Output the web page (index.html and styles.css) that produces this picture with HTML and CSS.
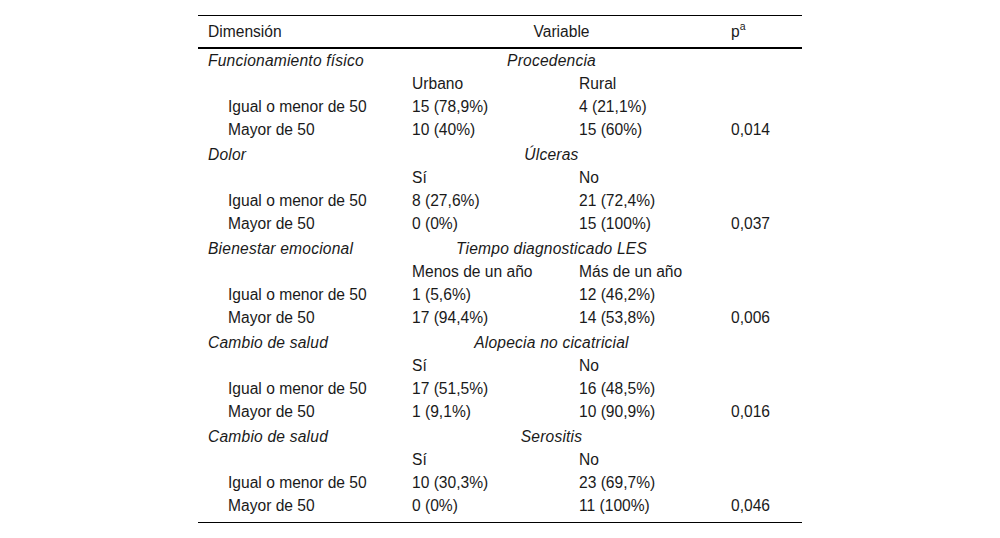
FILE: index.html
```html
<!DOCTYPE html>
<html lang="es">
<head>
<meta charset="utf-8">
<link rel="stylesheet" href="styles.css">
</head>
<body>
<table class="data">
  <colgroup>
    <col class="c1"><col class="c2"><col class="c3"><col class="c4">
  </colgroup>
  <thead>
    <tr><th>Dimensión</th><th colspan="2" class="center">Variable</th><th>p<sup>a</sup></th></tr>
  </thead>
  <tbody>
    <tr class="group first"><td class="it">Funcionamiento físico</td><td colspan="2" class="it center">Procedencia</td><td></td></tr>
    <tr><td></td><td>Urbano</td><td>Rural</td><td></td></tr>
    <tr><td class="ind">Igual o menor de 50</td><td>15 (78,9%)</td><td>4 (21,1%)</td><td></td></tr>
    <tr><td class="ind">Mayor de 50</td><td>10 (40%)</td><td>15 (60%)</td><td>0,014</td></tr>

    <tr class="group"><td class="it">Dolor</td><td colspan="2" class="it center">Úlceras</td><td></td></tr>
    <tr><td></td><td>Sí</td><td>No</td><td></td></tr>
    <tr><td class="ind">Igual o menor de 50</td><td>8 (27,6%)</td><td>21 (72,4%)</td><td></td></tr>
    <tr><td class="ind">Mayor de 50</td><td>0 (0%)</td><td>15 (100%)</td><td>0,037</td></tr>

    <tr class="group"><td class="it">Bienestar emocional</td><td colspan="2" class="it center">Tiempo diagnosticado LES</td><td></td></tr>
    <tr><td></td><td>Menos de un año</td><td>Más de un año</td><td></td></tr>
    <tr><td class="ind">Igual o menor de 50</td><td>1 (5,6%)</td><td>12 (46,2%)</td><td></td></tr>
    <tr><td class="ind">Mayor de 50</td><td>17 (94,4%)</td><td>14 (53,8%)</td><td>0,006</td></tr>

    <tr class="group"><td class="it">Cambio de salud</td><td colspan="2" class="it center">Alopecia no cicatricial</td><td></td></tr>
    <tr><td></td><td>Sí</td><td>No</td><td></td></tr>
    <tr><td class="ind">Igual o menor de 50</td><td>17 (51,5%)</td><td>16 (48,5%)</td><td></td></tr>
    <tr><td class="ind">Mayor de 50</td><td>1 (9,1%)</td><td>10 (90,9%)</td><td>0,016</td></tr>

    <tr class="group"><td class="it">Cambio de salud</td><td colspan="2" class="it center">Serositis</td><td></td></tr>
    <tr><td></td><td>Sí</td><td>No</td><td></td></tr>
    <tr><td class="ind">Igual o menor de 50</td><td>10 (30,3%)</td><td>23 (69,7%)</td><td></td></tr>
    <tr class="last"><td class="ind">Mayor de 50</td><td>0 (0%)</td><td>11 (100%)</td><td>0,046</td></tr>
  </tbody>
</table>
</body>
</html>
```

FILE: styles.css
```css
html, body {
  margin: 0;
  padding: 0;
  background: #fff;
}
body {
  font-family: "Liberation Sans", Arial, sans-serif;
  font-size: 15.6px;
  color: #1a1a1a;
  padding-top: 15px;
}
.data {
  width: 604px;
  margin: 0 auto;
  border-collapse: collapse;
  table-layout: fixed;
}
.c1 { width: 204px; }
.c2 { width: 167px; }
.c3 { width: 152px; }
.c4 { width: 81px; }
.data th {
  font-weight: normal;
  text-align: left;
  padding: 0 0 0 10px;
  line-height: 31px;
  border-top: 1px solid #000;
  border-bottom: 2px solid #000;
  vertical-align: middle;
}
.data th.center {
  text-align: center;
  padding-left: 0;
}
.data th sup {
  font-size: 10.5px;
  line-height: 0;
  vertical-align: 7px;
}
.data td {
  padding: 0 0 0 10px;
  line-height: 23px;
  vertical-align: middle;
  white-space: nowrap;
}
.data tr.group td {
  padding-top: 2px;
}
.data tr.group.first td {
  padding-top: 0;
}
.data td.center {
  text-align: center;
  padding-left: 0;
  padding-right: 20px;
}
.data tr.last td {
  padding-bottom: 5px;
  border-bottom: 1px solid #000;
}
.data .it {
  font-style: italic;
  letter-spacing: 0.2px;
}
.data .ind {
  padding-left: 30px;
}
```
